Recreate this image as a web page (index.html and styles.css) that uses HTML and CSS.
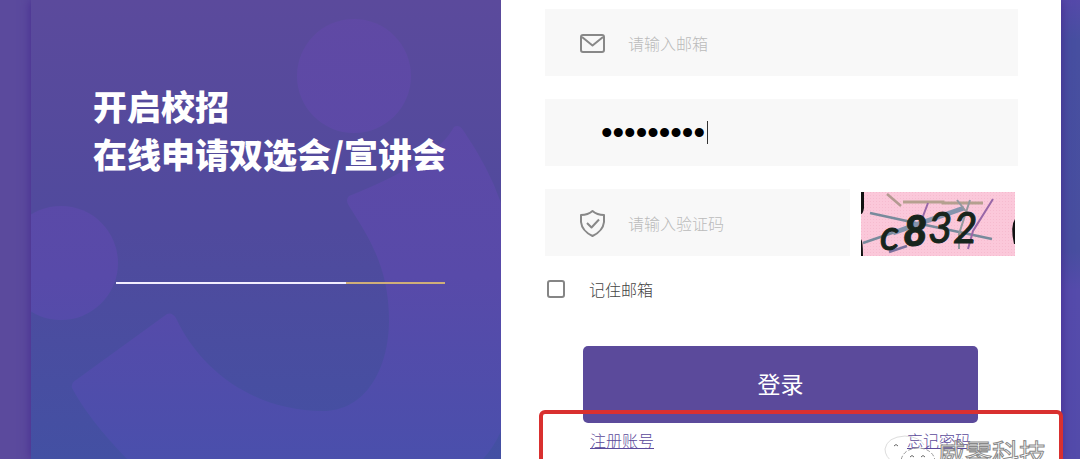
FILE: index.html
```html
<!DOCTYPE html>
<html lang="zh-Hans">
<head>
  <meta charset="UTF-8" />
  <meta name="viewport" content="width=device-width, initial-scale=1.0"/>
  <title>校招登录</title>
  <link rel="stylesheet" href="styles.css">
</head>
<body>
  <div class="page">
    <div class="card">
      <section class="banner">
        <svg class="banner-bg" viewBox="0 0 470 459" preserveAspectRatio="xMinYMin slice" aria-hidden="true">
          <defs>
            <linearGradient id="shape" gradientUnits="userSpaceOnUse" x1="0" y1="0" x2="0" y2="459">
              <stop offset="0" stop-color="#6049a4"/>
              <stop offset="0.6" stop-color="#584aa9"/>
              <stop offset="1" stop-color="#4a4fac"/>
            </linearGradient>
          </defs>
          <g fill="url(#shape)">
            <circle cx="323" cy="76" r="57"/>
            <circle cx="30" cy="263" r="57"/>
            <path d="M318 196 Q404 162 423 127 Q428 124 432 130 Q458 168 470 203 V431 Q463 447 452 459 H96 Q58 420 41 388 Q40 383 45 380 L136 314 Q141 312 145 318 C170 372 225 411 292 411 C334 411 358 370 358 320 C358 270 340 240 318 206 Q314 200 318 196 Z"/>
          </g>
        </svg>
        <h1>开启校招<br>在线申请双选会/宣讲会</h1>
        <div class="line"></div>
      </section>

      <main class="panel">
        <form class="login-form">
          <div class="field">
            <label for="email" aria-label="邮箱">
              <svg class="icon" viewBox="0 0 28 28">
                <rect x="2" y="6" width="23" height="17" rx="2"/>
                <path d="M3 8 L13.500 16.500 L24 8"/>
              </svg>
            </label>
            <input type="email" id="email" placeholder="请输入邮箱">
          </div>

          <div class="field field-password">
            <input type="password" id="password" value="123456789" aria-label="密码">
            <span class="caret"></span>
          </div>

          <div class="code-row">
            <div class="field">
              <label for="code" aria-label="验证码">
                <svg class="icon" viewBox="0 0 28 28">
                  <path d="M13.500 2 Q18 6 25 6 V13 Q24 22 13.500 27 Q3 22 2 13 V6 Q9 6 13.500 2 Z"/>
                  <path d="M8 14 L12.500 18.500 L20 10.500"/>
                </svg>
              </label>
              <input type="text" id="code" placeholder="请输入验证码">
            </div>
            <svg class="captcha" viewBox="0 0 154 64" role="img" aria-label="验证码图片">
              <defs>
                <pattern id="dots" width="3" height="3" patternUnits="userSpaceOnUse">
                  <rect width="3" height="3" fill="#fbc8da"/>
                  <rect width="1" height="1" fill="#f6bbcf"/>
                </pattern>
              </defs>
              <rect width="154" height="64" fill="url(#dots)"/>
              <g fill="none" stroke-width="2.500">
                <path stroke="#b39a91" d="M26 2 L40 14"/>
                <path stroke="#b5a08f" stroke-width="3" d="M42 10 H82 V11 H122"/>
                <path stroke="#788a9c" d="M9 21 L55 31 L98 40 L131 47"/>
                <path stroke="#788a9c" d="M2 51 L34 40 L60 30"/>
                <path stroke="#8594ad" stroke-width="5" d="M32 41 L60 31 L103 16"/>
                <path stroke="#9867a7" stroke-width="2" d="M132 7 L112 39 L107 57 M67 11 L56 40"/>
                <path stroke="#7c719c" d="M28 60 L46 54"/>
                <path stroke="#94989e" stroke-width="2" d="M96 8 L107 22 M109 8 L98 42 V57"/>
              </g>
              <g class="captcha-text">
                <text x="19" y="58" font-size="42">c</text>
                <text class="bold" x="42" y="54" font-size="42">8</text>
                <text x="67" y="51" font-size="42">3</text>
                <text x="92" y="51" font-size="42">2</text>
              </g>
              <path fill="#111" d="M0 0 H3 V16 Q2 22 0 22 Z M0 47 Q2 49 2 64 H0 Z M154 27 Q149 34 153 52 L154 52 Z"/>
            </svg>
          </div>

          <label class="remember"><input type="checkbox"> 记住邮箱</label>

          <div class="actions">
            <button type="submit">登录</button>
            <div class="links">
              <a href="#">注册账号</a>
              <a href="#">忘记密码</a>
            </div>
          </div>
        </form>
      </main>

      <div class="highlight"></div>
      <div class="watermark">
        <svg viewBox="0 0 54 44" aria-hidden="true">
          <path class="bubble" d="M16 34 L8 38 L10 32 Q1 26 1 18 Q3 6 21 5 Q36 6 40 14"/>
          <path class="bubble-front" d="M34 17 C24 17 17 23 17 31 C17 39 24 44 34 44 C44 44 51 39 51 31 C51 23 44 17 34 17 Z"/>
          <path class="eyes" d="M10 15 Q12 12 14 15 M26 26 Q28 23 30 26 M37 26 Q39 23 41 26"/>
        </svg>
        <span>威零科技</span>
      </div>
    </div>
  </div>
</body>
</html>
```
FILE: styles.css
```css
* {
  box-sizing: border-box;
  font-family: "Noto Sans CJK SC", sans-serif;
}

body {
  margin: 0;
}

.page {
  height: 100vh;
  padding: 0 19px 0 31px;
  background: linear-gradient(90deg, #5b4a9d 50%, transparent 50%),
    linear-gradient(#5549a9 0, #474fa0 40px, #484e9f 250px, #554bab 290px, #534baa 100%);
  overflow: hidden;
}

.card {
  position: relative;
  display: grid;
  grid-template-columns: minmax(0, 47fr) minmax(0, 56fr);
  height: 100%;
  background: #fff;
  box-shadow: 0 0 10px #452a8f;
}

.banner {
  position: relative;
  padding: 82px 0 0 62px;
  background: linear-gradient(#5b4a9c, #504a9d 50%, #4350a3);
}

.banner-bg {
  position: absolute;
  inset: 0;
  width: 100%;
  height: 100%;
}

h1 {
  position: relative;
  margin: 0;
  color: #fff;
  font-size: 34px;
  font-weight: 900;
  line-height: 48px;
  white-space: nowrap;
}

.line {
  position: relative;
  height: 2px;
  margin: 104px 56px 0 23px;
  background: linear-gradient(90deg, #f1edff 70%, #cfae79 70%);
}

.panel {
  padding: 9px 43px 0 44px;
}

.login-form {
  display: flex;
  flex-direction: column;
  gap: 23px;
}

.field {
  position: relative;
  display: flex;
  flex: 1;
  align-items: center;
  gap: 21px;
  min-width: 0;
  height: 67px;
  min-height: 67px;
  padding: 0 34px;
  background: #f8f8f8;
}

.field label {
  display: flex;
}

.icon {
  width: 28px;
  height: 28px;
  fill: none;
  stroke: #888;
  stroke-width: 2;
  stroke-linejoin: round;
}

.field input {
  flex: 1;
  width: 100%;
  min-width: 0;
  padding: 0;
  border: none;
  outline: none;
  background: transparent;
  color: #000;
  font-size: 16px;
  font-weight: 300;
}

.field input::placeholder {
  color: #bbb;
}

.field-password {
  padding-left: 56px;
}

.field-password input {
  font-family: "DejaVu Sans", sans-serif;
  font-size: 33px;
}

.caret {
  position: absolute;
  left: 162px;
  width: 1px;
  height: 23px;
  background: #333;
}

.code-row {
  display: flex;
  align-items: flex-end;
  gap: 11px;
  padding-right: 3px;
}

.captcha {
  flex: none;
  width: 154px;
  height: 64px;
}

.captcha-text {
  fill: #17251c;
  stroke: #17251c;
}

.captcha-text text {
  font-family: Lato, sans-serif;
  font-style: italic;
}

.captcha-text .bold {
  font-weight: 900;
}

.remember {
  display: flex;
  align-items: center;
  gap: 24px;
  height: 20px;
  color: #444;
  font-size: 16px;
  font-weight: 300;
}

.remember input {
  appearance: none;
  width: 18px;
  height: 18px;
  margin: 0 0 0 2px;
  border: 2px solid #858585;
  border-radius: 3px;
  background: #fff;
}

.actions {
  padding: 24px 40px 0 38px;
}

button {
  display: block;
  width: 100%;
  height: 77px;
  padding: 0 0 4px;
  border: none;
  border-radius: 5px;
  background: #5b4a9b;
  color: #fff;
  font-size: 23px;
  cursor: pointer;
}

.links {
  display: flex;
  justify-content: space-between;
  padding: 5px 7px 0;
  line-height: 24px;
}

.links a {
  color: #5b4a9b;
  font-size: 16px;
  font-weight: 300;
}

/* 红色标注框 */
.highlight {
  position: absolute;
  top: 410px;
  right: -2px;
  bottom: -10px;
  width: 524px;
  border: 4px solid #d9302f;
  border-radius: 6px;
  pointer-events: none;
}

.watermark {
  position: absolute;
  top: 431px;
  right: 15px;
  display: flex;
  align-items: flex-start;
  color: #fff;
  font-size: 27px;
  line-height: 44px;
  pointer-events: none;
}

.watermark svg {
  width: 54px;
  height: 44px;
  fill: none;
  stroke: #999;
}

.watermark .bubble {
  stroke: #ddd;
}

.watermark .bubble-front {
  fill: #fff;
  stroke-dasharray: 4 2;
}

.watermark .eyes {
  stroke: #666;
}

.watermark span {
  -webkit-text-stroke: 1px #888;
}
```
